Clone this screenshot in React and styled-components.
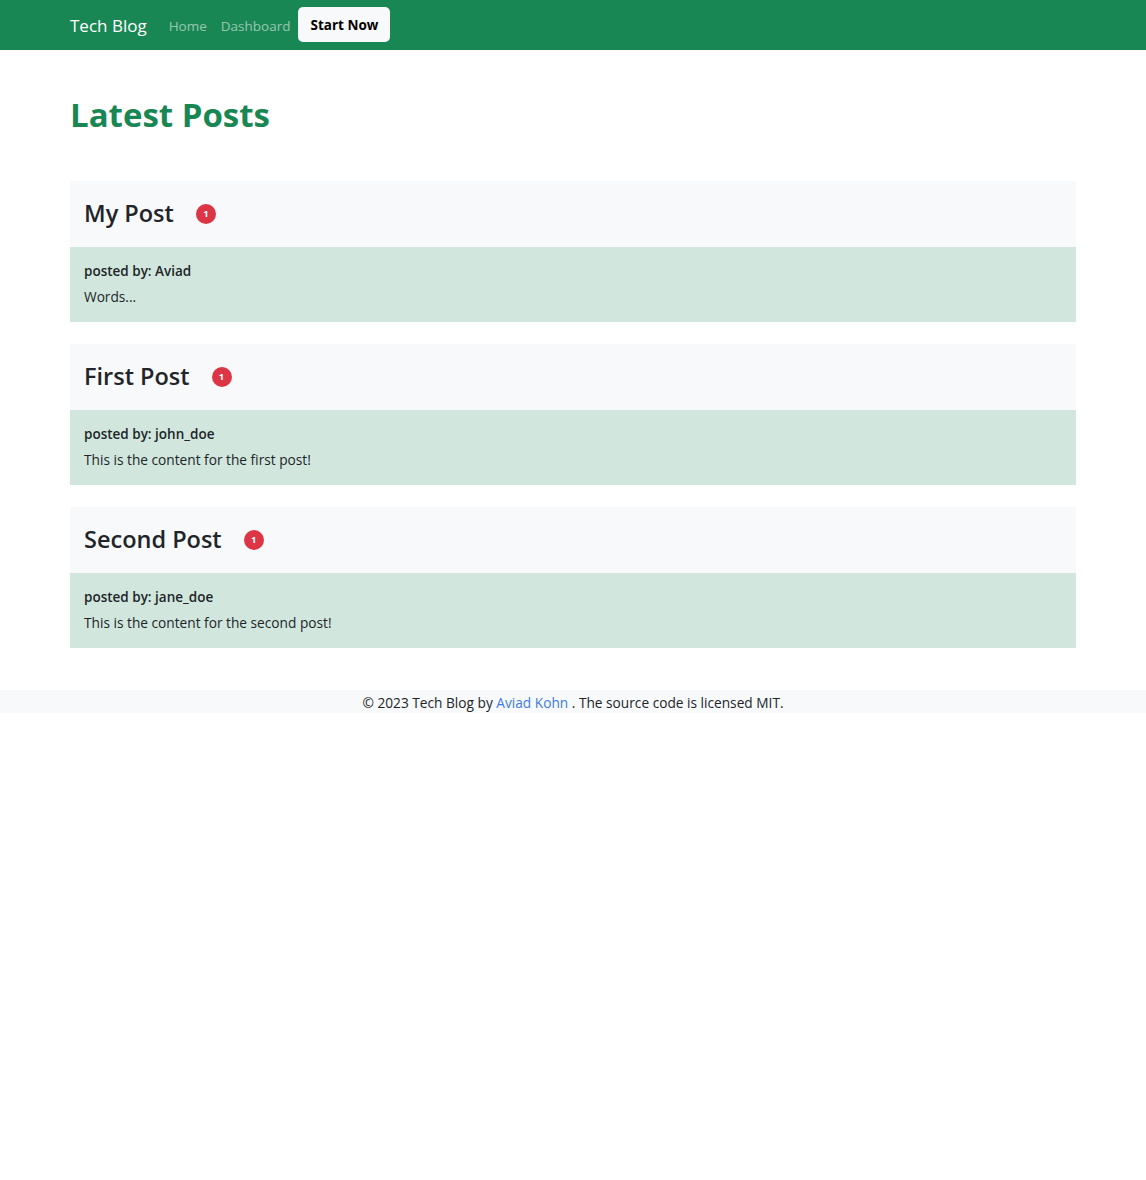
import React from 'react';
import styled, { createGlobalStyle } from 'styled-components';

const posts = [
  { title: 'My Post', author: 'Aviad', content: 'Words...' },
  { title: 'First Post', author: 'john_doe', content: 'This is the content for the first post!' },
  { title: 'Second Post', author: 'jane_doe', content: 'This is the content for the second post!' },
];

function App() {
  return (
    <>
      <GlobalStyle />
      <Navbar>
        <NavInner>
          <Brand href='#'>Tech Blog</Brand>
          <NavLink href='#'>Home</NavLink>
          <NavLink href='#'>Dashboard</NavLink>
          <StartButton>Start Now</StartButton>
        </NavInner>
      </Navbar>
      <Main>
        <Heading>Latest Posts</Heading>
        {posts.map((post) => (
          <Card key={post.title}>
            <CardHeader>
              <CardTitle>{post.title}</CardTitle>
              <Badge>1</Badge>
            </CardHeader>
            <CardBody>
              <Author>posted by: {post.author}</Author>
              <Content>{post.content}</Content>
            </CardBody>
          </Card>
        ))}
      </Main>
      <Footer>
        © 2023 Tech Blog by <FooterLink href='#'>Aviad Kohn</FooterLink> . The source code is licensed MIT.
      </Footer>
    </>
  );
}

const GlobalStyle = createGlobalStyle`
  body {
    margin: 0;
    background: #fff;
    color: #212529;
    font-family: "Open Sans", "Noto Sans", sans-serif;
  }
`;

const Navbar = styled.nav`
  background: #198754;
  height: 50px;
`;

const NavInner = styled.div`
  max-width: 1006px;
  height: 100%;
  margin: 0 auto;
  display: flex;
  align-items: center;
`;

const Brand = styled.a`
  color: #fff;
  text-decoration: none;
  font-size: 17px;
  margin-right: 15px;
  margin-top: 1px;
`;

const NavLink = styled.a`
  color: rgba(255, 255, 255, 0.55);
  text-decoration: none;
  font-size: 13.5px;
  padding: 0 7px;
  margin-top: 1px;
`;

const StartButton = styled.button`
  background: #f8f9fa;
  color: #000;
  border: none;
  border-radius: 5px;
  font-family: inherit;
  font-weight: 700;
  font-size: 13.5px;
  width: 92px;
  height: 35px;
  margin-left: 1px;
  margin-top: -1px;
  padding: 0;
`;

const Main = styled.main`
  max-width: 1006px;
  margin: 0 auto;
  padding-top: 45px;
  padding-bottom: 20px;
`;

const Heading = styled.h1`
  margin: 0 0 46px;
  color: #198754;
  font-size: 33px;
  font-weight: 700;
  line-height: 1.2;
`;

const Card = styled.section`
  margin-bottom: 22px;
`;

const CardHeader = styled.div`
  background: #f8f9fa;
  height: 66px;
  padding: 0 14px;
  display: flex;
  align-items: center;
  gap: 22px;
`;

const CardTitle = styled.h2`
  margin: 0;
  font-size: 23.5px;
  font-weight: 600;
  margin-top: -2px;
`;

const Badge = styled.span`
  width: 20px;
  height: 20px;
  border-radius: 50%;
  background: #dc3545;
  color: #fff;
  font-size: 9.5px;
  font-weight: 700;
  display: flex;
  align-items: center;
  justify-content: center;
`;

const CardBody = styled.div`
  background: #d1e7dd;
  height: 75px;
  padding: 14px 14px 0;
  box-sizing: border-box;
`;

const Author = styled.div`
  font-size: 13.5px;
  font-weight: 600;
  line-height: 20px;
  margin-bottom: 6px;
`;

const Content = styled.div`
  font-size: 13.7px;
  line-height: 20px;
`;

const Footer = styled.footer`
  background: #f8f9fa;
  height: 23px;
  text-align: center;
  font-size: 13.7px;
  line-height: 25px;
  color: #212529;
`;

const FooterLink = styled.a`
  color: #3d7be0;
  text-decoration: none;
`;

export default App;
